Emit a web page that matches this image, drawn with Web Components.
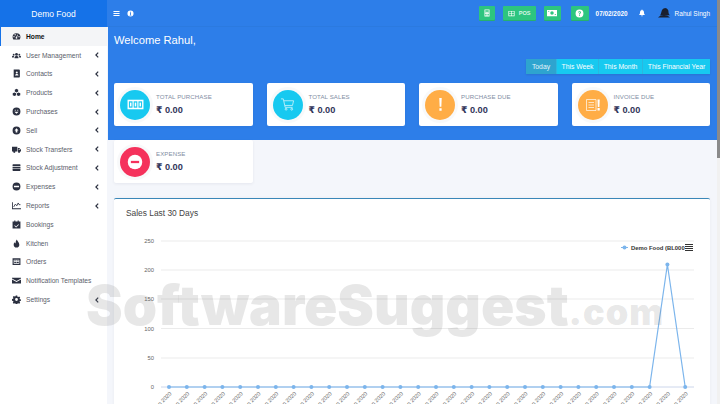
<!DOCTYPE html>
<html><head><meta charset="utf-8"><style>
html,body{margin:0;height:404px;overflow:hidden;font-family:"Liberation Sans",Arial,sans-serif}
</style></head><body>
<x-app>
<x-sidebar slot="side" title-text="Demo Food">
<x-nav icon="gauge" active>Home</x-nav>
<x-nav icon="users" more>User Management</x-nav>
<x-nav icon="book" more>Contacts</x-nav>
<x-nav icon="cubes" more>Products</x-nav>
<x-nav icon="down" more>Purchases</x-nav>
<x-nav icon="up" more>Sell</x-nav>
<x-nav icon="truck" more>Stock Transfers</x-nav>
<x-nav icon="db" more>Stock Adjustment</x-nav>
<x-nav icon="minus" more>Expenses</x-nav>
<x-nav icon="chart" more>Reports</x-nav>
<x-nav icon="cal">Bookings</x-nav>
<x-nav icon="fire">Kitchen</x-nav>
<x-nav icon="list">Orders</x-nav>
<x-nav icon="mail">Notification Templates</x-nav>
<x-nav icon="cog" more>Settings</x-nav>
</x-sidebar>
<x-topbar slot="top"></x-topbar>
<x-dash slot="main">
<x-stat color="#17c9f0" icon="cash" label="TOTAL PURCHASE"></x-stat>
<x-stat color="#17c9f0" icon="cart" label="TOTAL SALES"></x-stat>
<x-stat color="#ffad46" icon="excl" label="PURCHASE DUE"></x-stat>
<x-stat color="#ffad46" icon="inv" label="INVOICE DUE"></x-stat>
<x-stat color="#f5325c" icon="nope" label="EXPENSE"></x-stat>
<x-chart slot="panel"></x-chart>
</x-dash>
<x-scroll slot="bar"></x-scroll>
<x-mark slot="over"></x-mark>
</x-app>
<script>
const ICONS={
gauge:'<path fill-rule="evenodd" d="M8 2a7 7 0 0 0-7 7c0 1.600.5 3 1.400 4.200h11.200A7 7 0 0 0 15 9a7 7 0 0 0-7-7zM3.500 9.500a1.200 1.200 0 1 1 0-2.400 1.200 1.200 0 0 1 0 2.400zM5.600 6a1.200 1.200 0 1 1 0-2.400 1.200 1.200 0 0 1 0 2.400zM8 12.200a1.700 1.700 0 0 1-.6-3.300L9.800 4.600l.8.4L9 9.300a1.700 1.700 0 0 1-1 2.900zM12.500 9.500a1.200 1.200 0 1 1 0-2.400 1.200 1.200 0 0 1 0 2.400z"/>',
users:'<circle cx="8" cy="6" r="2.500"/><circle cx="3" cy="6.500" r="1.700"/><circle cx="13" cy="6.500" r="1.700"/><path d="M4.500 13v-1.500C4.500 10 6 9 8 9s3.500 1 3.500 2.500V13zM0 11.500V10c0-1 1-1.500 3-1.500l.8.300C3.300 9.500 3.200 10.500 3.200 11.500zM16 11.500V10c0-1-1-1.500-3-1.500l-.8.300c.5.700.6 1.700.6 2.700z"/>',
book:'<path fill-rule="evenodd" d="M3 1h9.500A1.500 1.500 0 0 1 14 2.500v11a1.500 1.500 0 0 1-1.500 1.500H3zM8.500 4.500a1.800 1.800 0 1 0 0 3.600 1.800 1.800 0 0 0 0-3.600zM5.500 11.500h6c0-1.500-1.300-2.500-3-2.500s-3 1-3 2.500z"/>',
cubes:'<path d="M8 1.500l3 1.500v3.300L8 7.800 5 6.300V3zM4.300 8l3 1.500v3.300l-3 1.500-3-1.500V9.500zM11.700 8l3 1.500v3.300l-3 1.500-3-1.500V9.500z"/>',
down:'<path fill-rule="evenodd" d="M8 1a7 7 0 1 0 0 14A7 7 0 0 0 8 1zM5 5h1.500v1.500H5zM9.500 5H11v1.500H9.500zM8 12l-3.800-3.500h7.600z"/>',
up:'<path fill-rule="evenodd" d="M8 1a7 7 0 1 0 0 14A7 7 0 0 0 8 1zM8 4l3.500 4H9.500v3.500h-3V8H4.500z"/>',
truck:'<path fill-rule="evenodd" d="M0 3h9.500v8.500H0zM10.500 5.500H13l3 3v3h-5.500zM12 7v1.700h2.300L12.800 7z"/><circle cx="4" cy="12.200" r="2"/><circle cx="12.500" cy="12.200" r="2"/>',
db:'<path d="M2 2h12a1 1 0 0 1 1 1v2.500H1V3a1 1 0 0 1 1-1zM1 6.500h14v3.200H1zM1 10.700h14V13a1 1 0 0 1-1 1H2a1 1 0 0 1-1-1z"/>',
minus:'<path fill-rule="evenodd" d="M8 1a7 7 0 1 0 0 14A7 7 0 0 0 8 1zM3.500 6.500h9v3h-9z"/>',
chart:'<path d="M0 2h1.500v11H16v1.500H0z"/><path d="M3 10.500l3-5 2.500 3L11 3.500l1.500 3H15" fill="none" stroke="currentColor" stroke-width="1.500"/>',
cal:'<path fill-rule="evenodd" d="M4 1h2v1.500h4V1h2v1.500h3V15H1V2.500h3zM11.300 7.500L7.300 11.500 5 9.200l-1 1 3.300 3.300 5-5z"/>',
fire:'<path d="M8.500 1c.5 2.500 4.500 5 4.500 9a5 5 0 0 1-10 0c0-2 1-3.300 2-4.200.2 1.200.7 1.900 1.500 2.200C6.300 5.500 7 3 8.500 1z"/>',
list:'<path fill-rule="evenodd" d="M1 2h14v12H1zM3 5v7h10V5z"/><path d="M4 6h3v1.500H4zM8 6h4v1.500H8zM4 9h3v1.500H4zM8 9h4v1.500H8z"/>',
mail:'<path d="M0 3h16v1.500L8 9 0 4.500zM0 6.300l8 4.500 8-4.500V13.500H0z"/>',
cog:'<path fill-rule="evenodd" d="M6.700 1h2.600l.4 2 1.300.6 1.800-1.100 1.800 1.800-1.100 1.800.5 1.300 2 .4v2.600l-2 .4-.5 1.300 1.100 1.800-1.800 1.800-1.800-1.100-1.300.5-.4 2H6.700l-.4-2-1.300-.5-1.800 1.100-1.800-1.800 1.100-1.800-.5-1.300-2-.4V6.900l2-.4.500-1.300-1.100-1.800 1.800-1.800 1.800 1.100 1.300-.6zM8 5.500a2.500 2.500 0 1 0 0 5 2.500 2.500 0 0 0 0-5z"/>',
cash:'<rect x=".5" y="3.500" width="15" height="9" fill="#fff"/><rect x="1.800" y="5" width="3.400" height="6" fill="#17c9f0"/><rect x="6.300" y="5" width="3.400" height="6" fill="#17c9f0"/><rect x="10.800" y="5" width="3.400" height="6" fill="#17c9f0"/><rect x="2.800" y="6.200" width="1.400" height="3.600" fill="#fff"/><rect x="7.300" y="6.200" width="1.400" height="3.600" fill="#fff"/><rect x="11.800" y="6.200" width="1.400" height="3.600" fill="#fff"/>',
cart:'<g fill="none" stroke="#fff" stroke-width=".8" opacity=".85"><path d="M1 2h2.500l2 9h8"/><path d="M4 4h10.500l-1.200 5H5.200"/><circle cx="6.500" cy="13" r="1"/><circle cx="12.500" cy="13" r="1"/></g>',
excl:'<path fill="#fff" d="M6.700 1h2.600l-.4 9.500H7.100zM6.800 12h2.400v2.600H6.800z"/>',
inv:'<g fill="none" stroke="#fff" stroke-width=".9" opacity=".75"><path d="M1.500 2.500h9.500v11H1.500zM3.500 5.500h5.500M3.500 8h5.500M3.500 10.500h5.500"/></g><path fill="#fff" d="M12.500 2.500h2.200l-.3 7.500h-1.600zM12.500 11h2.200v2.500h-2.200z"/>',
nope:'<circle cx="8" cy="8" r="5.800" fill="#fff"/><rect x="4.700" y="7.100" width="6.600" height="1.800" fill="#f5325c"/>',
calc:'<path fill="#fff" fill-rule="evenodd" d="M3 1h10v14H3zM4.500 2.500v3h7v-3zM4.500 7v1.500H7V7zM9 7v1.500h2.500V7zM4.500 10v3H7v-3zM9 10v3h2.500v-3z"/>',
grid:'<path fill="#fff" fill-rule="evenodd" d="M1 2h14v12H1zM7.300 3.500H2.500v3.700h4.800zM13.500 3.500H8.700v3.700h4.800zM7.300 8.700H2.500v3.800h4.800zM13.500 8.700H8.700v3.800h4.800z"/>',
money:'<path fill="#fff" fill-rule="evenodd" d="M0 3h16v10H0zM8 5.200a2.800 2.800 0 1 0 0 5.600 2.800 2.800 0 0 0 0-5.600zM2 5h1.500v1.500H2zM12.500 9.500H14V11h-1.500z"/>',
help:'<path fill="#fff" fill-rule="evenodd" d="M8 1a7 7 0 1 0 0 14A7 7 0 0 0 8 1zM5.500 6.200C5.700 4.700 6.800 4 8.100 4c1.500 0 2.500.9 2.500 2.100 0 1.800-1.800 1.700-1.800 3.100H7.300c0-2.100 1.700-2.100 1.700-3 0-.5-.4-.8-.9-.8-.6 0-1 .3-1.100 1zM7.200 10.200h1.700V12H7.200z"/>',
bell:'<path fill="#fff" d="M8 1a1 1 0 0 1 1 1v.6C11 3 12 4.700 12 7c0 3 1.200 4 2 5H2c.8-1 2-2 2-5 0-2.300 1-4 3-4.400V2a1 1 0 0 1 1-1zM6.300 13h3.400a1.700 1.700 0 0 1-3.400 0z"/>',
bars:'<path fill="#fff" d="M1 2.500h14v2H1zM1 7h14v2H1zM1 11.500h14v2H1z"/>',
info:'<path fill="#fff" fill-rule="evenodd" d="M8 1a7 7 0 1 0 0 14A7 7 0 0 0 8 1zM7 4h2v2H7zM6.800 7H9v4.500h1V12.500H6V11.500h1V8H6.800z"/>'
};
function def(name,html,init){customElements.define(name,class extends HTMLElement{
 connectedCallback(){if(this.shadowRoot)return;const r=this.attachShadow({mode:'open'});r.innerHTML=typeof html==='function'?html(this):html;if(init)init(r,this);}
});}
const svg=(n,s,extra='')=>`<svg viewBox="0 0 16 16" width="${s}" height="${s}" fill="currentColor" style="display:block;flex:none;${extra}">${ICONS[n]}</svg>`;

def('x-app',`<style>
:host{display:grid;grid-template-columns:107px 1fr 3px;grid-template-rows:27px 377px;width:720px;height:404px;position:relative;overflow:hidden;background:#f4f6fb}
.s{grid-row:1/3;display:block}
.b{grid-row:1/3;grid-column:3;display:block}
.t,.m{display:block;min-width:0}
.m{overflow:hidden;padding-left:1px}
.t{padding-left:1px;background:#2d7ee9}
</style><div class="s"><slot name="side"></slot></div><div class="t"><slot name="top"></slot></div><div class="b"><slot name="bar"></slot></div><div class="m"><slot name="main"></slot></div><slot name="over"></slot>`);

def('x-scroll',`<style>
:host{display:block;height:404px;background:#f1f1f1}
div{height:158px;background:#8a8a8a}
</style><div></div>`);

def('x-sidebar',h=>`<style>
:host{display:block;background:#fff;height:404px}
.h{height:27px;background:#1572e8;color:#fff;font-size:8.500px;display:flex;align-items:center;justify-content:center}
</style><div class="h">${h.getAttribute('title-text')}</div><slot></slot>`);

def('x-nav',h=>`<style>
:host{display:flex;align-items:center;height:18.800px;font-size:6.700px;color:#5b606b;box-sizing:border-box;padding-left:12px;position:relative}
:host([active]){background:#f4f5f7;color:#111;font-weight:bold;border-left:1px solid #1572e8;padding-left:11px}
.i{color:#2b3040;width:14px;flex:none}
.c{position:absolute;left:94.500px;top:6.500px}
</style><span class="i">${svg(h.getAttribute('icon'),9)}</span><span class="t"><slot></slot></span>${h.hasAttribute('more')?'<svg class="c" width="4" height="6" viewBox="0 0 4 6"><path d="M3.200.6L.9 3l2.300 2.400" fill="none" stroke="#2b3040" stroke-width="1.200"/></svg>':''}`);

def('x-topbar',()=>`<style>
:host{display:flex;align-items:center;height:27px;background:#2d7ee9;color:#fff;padding:0 7px 0 5px;box-sizing:border-box;font-size:6.500px;border-bottom:1px solid #2b7ae0}
.l{display:flex;gap:7px;align-items:center;margin-right:auto}
.b{height:14px;background:#2dc57f;display:flex;align-items:center;justify-content:center;border-radius:1px;box-shadow:0 1px 0 #27b06f}
.d{font-weight:bold;margin:0 10px 0 7px;font-size:6.400px}
.u{margin-left:5px}
.p{font-size:5.600px;font-weight:bold;margin-left:4px;color:#d8f5e6}
.a{color:#1a2030;margin-left:12px}
</style>
<div class="l">${svg('bars',7)}${svg('info',7)}</div>
<div class="b" style="width:16px">${svg('calc',8)}</div>
<div class="b" style="width:33px;margin-left:8px">${svg('grid',7)}<span class="p">POS</span></div>
<div class="b" style="width:17px;margin-left:8px">${svg('money',10)}</div>
<div class="b" style="width:18px;margin-left:10px">${svg('help',9)}</div>
<span class="d">07/02/2020</span>
${svg('bell',8)}
<svg class="a" viewBox="0 0 16 16" width="12" height="12" fill="#1a2030" style="flex:none"><path d="M9 1.500a5 5 0 0 1 5 5.500c0 2 1 3 2 4H2.500C5 9 4 1.500 9 1.500z"/><path d="M0 14c2-2.500 5-3.500 8-3.500s6 1 8 3.500z"/></svg>
<span class="u">Rahul Singh</span>`);

def('x-dash',()=>`<style>
:host{display:block;background:linear-gradient(#2d7ee9 113px,#f4f6fb 113px);padding:0 7px 0 6px;box-sizing:border-box}
h1{margin:0;padding-top:6px;font-size:11.200px;font-weight:normal;color:#fff;line-height:14px}
.r{display:flex;justify-content:flex-end;padding-top:12px;margin-bottom:9px}
.g{display:flex;height:15px;font-size:6.800px;color:#fff;box-shadow:0 1px 2px rgba(0,0,0,.1)}
.g span{display:flex;align-items:center;justify-content:center;background:#17c9f0;border-left:1px solid #2bb7df;box-sizing:border-box}
.g span:first-child{background:#2ea4cf;border:0;color:#e4f4fa}
.c{display:grid;grid-template-columns:repeat(4,1fr);gap:14px}
.p{margin-top:15px}
</style>
<h1>Welcome Rahul,</h1>
<div class="r"><div class="g"><span style="width:30px">Today</span><span style="width:42px">This Week</span><span style="width:44px">This Month</span><span style="width:68px">This Financial Year</span></div></div>
<div class="c"><slot></slot></div>
<div class="p"><slot name="panel"></slot></div>`);

def('x-stat',h=>{const n=h.getAttribute('icon');const sz={nope:20,excl:15,cart:15,cash:17,inv:16}[n];return `<style>
:host{display:flex;align-items:center;height:43px;background:#fff;border-radius:2px;padding-left:6px;box-sizing:border-box;box-shadow:0 1px 3px rgba(50,50,93,.08)}
.i{width:30px;height:30px;border-radius:50%;background:${h.getAttribute('color')};box-shadow:0 0 0 3px rgba(120,130,160,.05);display:flex;align-items:center;justify-content:center;margin-right:6px;flex:none}
.l{font-size:6.100px;color:#7f8ea3;line-height:8px;letter-spacing:.1px}
.v{font-size:9.200px;font-weight:bold;color:#32355a;line-height:12px;margin-top:3px;font-family:"Liberation Sans","DejaVu Sans",sans-serif}
</style><div class="i">${svg(n,sz)}</div><div><div class="l">${h.getAttribute('label')}</div><div class="v">₹ 0.00</div></div>`;});

def('x-chart',()=>{
 const ys={250:240,200:269,150:298,100:327.500,50:357,0:386};
 let s='';
 const ox=114,oy=197;
 for(const k in ys){const y=ys[k]-oy;
  s+=`<line x1="${161-ox}" x2="${694-ox}" y1="${y}" y2="${y}" stroke="${k==0?'#ccd6eb':'#ebebeb'}"/>`;
  s+=`<text x="${154-ox}" y="${y+2}" text-anchor="end" font-size="5.800" fill="#666">${k}</text>`;
 }
 let pts=[];
 for(let i=0;i<30;i++){const x=169+i*17.8-ox;const y=(i==28?263.500:386)-oy;pts.push([x,y]);}
 s+=`<polyline fill="none" stroke="#7cb5ec" stroke-width="1.200" points="${pts.map(p=>p.join(',')).join(' ')}"/>`;
 const days=['09','10','11','12','13','14','15','16','17','18','19','20','21','22','23','24','25','26','27','28','29','30','31','01','02','03','04','05','06','07'];
 const base=393-oy;
 pts.forEach((p,i)=>{s+=`<circle cx="${p[0]}" cy="${p[1]}" r="2" fill="#7cb5ec"/>`;
  s+=`<text x="${p[0]+3}" y="${base}" text-anchor="end" font-size="5.600" fill="#666" transform="rotate(-45 ${p[0]+3} ${base})">${days[i]} Jan 2020</text>`;});
 s+=`<text transform="translate(${138-ox} 313) rotate(-90)" text-anchor="middle" font-size="5.800" fill="#333">Total Sales (INR)</text>`;
 s+=`<line x1="${621-ox}" x2="${628-ox}" y1="${246.500-oy}" y2="${246.500-oy}" stroke="#7cb5ec"/><circle cx="${624.500-ox}" cy="${246.500-oy}" r="2" fill="#7cb5ec"/>`;
 s+=`<text x="${631-ox}" y="${248.500-oy}" font-size="5.900" font-weight="bold" fill="#333">Demo Food (BL000</text>`;
 s+=`<path d="M${685-ox} ${243.500-oy}h8M${685-ox} ${245.500-oy}h8M${685-ox} ${247.500-oy}h8M${685-ox} ${249.500-oy}h8" stroke="#333" stroke-width="1"/>`;
 return `<style>
:host{display:block;background:#fff;border-top:1px solid #3a87b8;border-radius:2px 2px 0 0;height:260px;position:relative;box-shadow:0 0 3px rgba(50,50,93,.06)}
.t{font-size:8.400px;color:#444;padding:9px 0 0 12px;line-height:10px}
svg{display:block;position:absolute;left:0;top:-1px}
</style><div class="t">Sales Last 30 Days</div><svg width="596" height="260" font-family="Liberation Sans">${s}</svg>`;
});

def('x-mark',()=>`<style>
:host{position:absolute;left:86px;top:270px;pointer-events:none;font-family:Inter,"DejaVu Sans",sans-serif;font-weight:900;font-size:55px;line-height:70px;color:rgba(120,120,120,.18);white-space:nowrap}
small{font-size:36px;letter-spacing:1px}
</style>SoftwareSuggest<small>.com</small>`);
</script>
</body></html>
